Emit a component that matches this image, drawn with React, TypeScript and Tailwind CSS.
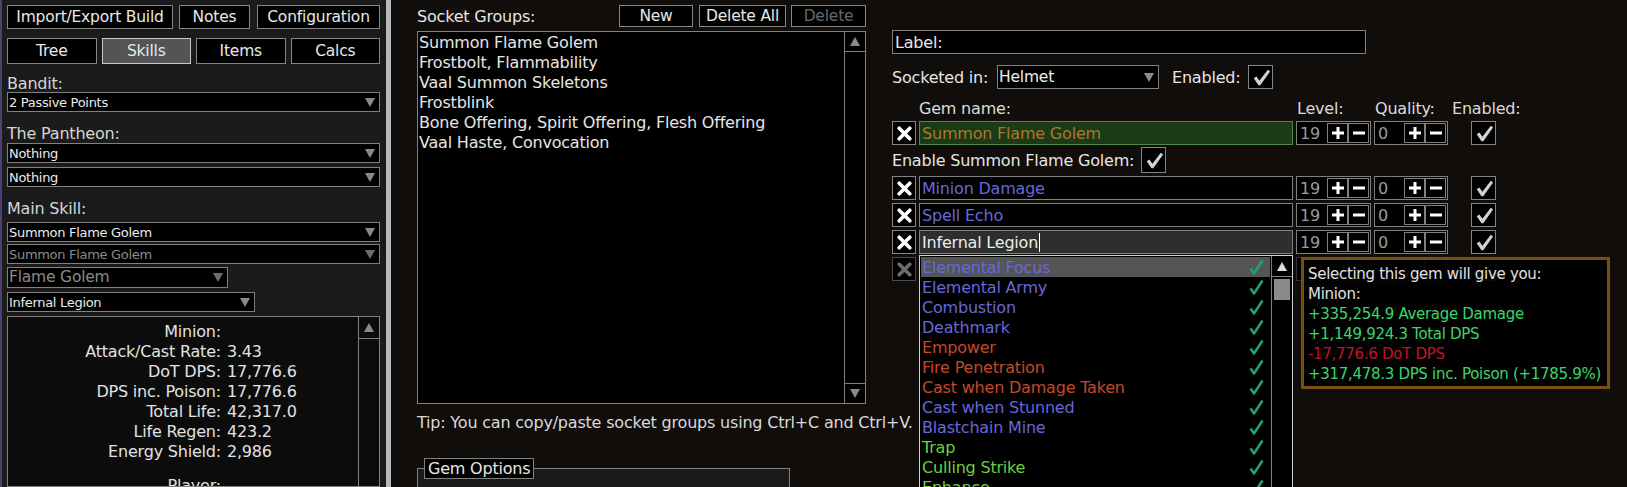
import React from "react";

const BLUE = "text-[#6767dc]";
const RED = "text-[#c4492b]";
const GREEN = "text-[#6ccf42]";

function Tri({ up = false, color = "#8a8a8a", size = 10 }: { up?: boolean; color?: string; size?: number }) {
  return (
    <svg width={size} height={size - 1} viewBox="0 0 10 9" className="shrink-0">
      <path d={up ? "M5 0L10 9H0Z" : "M0 0H10L5 9Z"} fill={color} />
    </svg>
  );
}

function XIcon({ color = "#fff" }: { color?: string }) {
  return (
    <svg width="15" height="15" viewBox="0 0 15 15">
      <path d="M2.2 2.2L12.8 12.8M12.8 2.2L2.2 12.8" stroke={color} strokeWidth="3.6" strokeLinecap="round" />
    </svg>
  );
}

function PlusIcon() {
  return (
    <svg width="12" height="12" viewBox="0 0 12 12">
      <path d="M6 0V12M0 6H12" stroke="#fff" strokeWidth="3" />
    </svg>
  );
}

function MinusIcon() {
  return (
    <svg width="12" height="12" viewBox="0 0 12 12">
      <path d="M0 6H12" stroke="#fff" strokeWidth="3" />
    </svg>
  );
}

function CheckIcon({ color = "#d2d2d2" }: { color?: string }) {
  return (
    <svg width="20" height="20" viewBox="0 0 22 22">
      <path d="M3 12.5L6 10.5L9.2 15L18.5 3L21 5L10.2 20H8.2Z" fill={color} />
    </svg>
  );
}

function SmallCheck() {
  return (
    <svg width="15" height="17" viewBox="0 0 15 17">
      <path d="M1.5 9.5L5 14.5L13.5 1.5" stroke="#22a06c" strokeWidth="2.6" fill="none" strokeLinejoin="round" />
    </svg>
  );
}

function Btn({
  children,
  className = "",
  active = false,
  disabled = false,
}: {
  children: React.ReactNode;
  className?: string;
  active?: boolean;
  disabled?: boolean;
}) {
  return (
    <div
      className={`flex shrink-0 items-center justify-center whitespace-nowrap border pt-[1px] text-[15.5px] ${
        active ? "border-[#c8c8c8] bg-[#545454]" : "border-[#858585] bg-black"
      } ${disabled ? "text-[#686868]" : "text-[#e8e8e8]"} ${className}`}
    >
      {children}
    </div>
  );
}

function Select({
  text,
  className = "",
  hClass = "h-[20px]",
  dim = false,
  big = false,
}: {
  text: string;
  className?: string;
  hClass?: string;
  dim?: boolean;
  big?: boolean;
}) {
  return (
    <div
      className={`flex shrink-0 items-center justify-between border border-[#808080] bg-black pl-[1px] pr-[4px] ${hClass} ${className}`}
    >
      <span
        className={`whitespace-nowrap pt-[1px] ${big ? "text-[15.5px] tracking-[-0.2px]" : "text-[13px] tracking-[-0.3px]"} ${
          dim ? "text-[#8a8a8a]" : "text-[#ececec]"
        }`}
      >
        {text}
      </span>
      <Tri color={dim ? "#6c6c6c" : "#8a8a8a"} />
    </div>
  );
}

function Label({ children, className = "" }: { children: React.ReactNode; className?: string }) {
  return <div className={`h-[16px] shrink-0 leading-[16px] text-[#d6d6d6] ${className}`}>{children}</div>;
}

function Check({ className = "", hClass = "h-[24px]", dim = false }: { className?: string; hClass?: string; dim?: boolean }) {
  return (
    <div
      className={`flex w-[25px] shrink-0 items-center justify-center border bg-black ${
        dim ? "border-[#3c3c3c]" : "border-[#858585]"
      } ${hClass} ${className}`}
    >
      {!dim && <CheckIcon />}
    </div>
  );
}

const stats: [string, string][] = [
  ["Minion:", ""],
  ["Attack/Cast Rate:", "3.43"],
  ["DoT DPS:", "17,776.6"],
  ["DPS inc. Poison:", "17,776.6"],
  ["Total Life:", "42,317.0"],
  ["Life Regen:", "423.2"],
  ["Energy Shield:", "2,986"],
];

function Stats() {
  return (
    <div className="mt-[4px] flex min-h-0 flex-1 overflow-hidden border border-[#808080] bg-[#0c0c0c]">
      <div className="flex-1 pt-[5px] text-[#e2e2e2]">
        {stats.map(([l, v]) => (
          <div key={l} className="flex h-[20px] leading-[20px]">
            <span className="w-[213px] text-right">{l}</span>
            <span className="pl-[6px]">{v}</span>
          </div>
        ))}
        <div className="mt-[14px] flex h-[20px] leading-[20px]">
          <span className="w-[213px] text-right">Player:</span>
        </div>
      </div>
      <div className="w-[21px] border-l border-[#808080]">
        <div className="flex h-[22px] items-center justify-center border-b border-[#808080]">
          <Tri up />
        </div>
      </div>
    </div>
  );
}

function LeftPanel() {
  return (
    <div className="flex w-[386px] shrink-0 flex-col border-l-2 border-[#4d4072] bg-[#1b1b1b] pl-[5px] pr-[6px] pt-[5px]">
      <div className="flex h-[24px] shrink-0 gap-[6px]">
        <Btn className="w-[166px]">Import/Export Build</Btn>
        <Btn className="w-[71px]">Notes</Btn>
        <Btn className="ml-[1px] w-[123px]">Configuration</Btn>
      </div>
      <div className="mt-[9px] grid h-[24px] shrink-0 grid-cols-4 gap-[5px]">
        <Btn>Tree</Btn>
        <Btn active>Skills</Btn>
        <Btn>Items</Btn>
        <Btn>Calcs</Btn>
      </div>
      <Label className="mt-[14px]">Bandit:</Label>
      <Select text="2 Passive Points" />
      <Label className="mt-[14px]">The Pantheon:</Label>
      <Select className="mt-[1px]" text="Nothing" />
      <Select className="mt-[4px]" text="Nothing" />
      <Label className="mt-[14px]">Main Skill:</Label>
      <Select className="mt-[5px]" text="Summon Flame Golem" />
      <Select className="mt-[2px]" text="Summon Flame Golem" dim />
      <Select className="mt-[3px] w-[221px]" hClass="h-[21px]" text="Flame Golem" dim big />
      <Select className="mt-[4px] w-[248px]" text="Infernal Legion" />
      <Stats />
    </div>
  );
}

const groups = [
  "Summon Flame Golem",
  "Frostbolt, Flammability",
  "Vaal Summon Skeletons",
  "Frostblink",
  "Bone Offering, Spirit Offering, Flesh Offering",
  "Vaal Haste, Convocation",
];

function SocketGroups() {
  return (
    <div className="flex w-[449px] shrink-0 flex-col pt-[5px]">
      <div className="flex h-[22px] shrink-0 items-center">
        <span className="pt-[1px]">Socket Groups:</span>
        <Btn className="ml-auto h-full w-[74px]">New</Btn>
        <Btn className="ml-[6px] h-full w-[87px]">Delete All</Btn>
        <Btn className="ml-[5px] h-full w-[75px]" disabled>
          Delete
        </Btn>
      </div>
      <div className="mt-[4px] flex h-[373px] shrink-0 border border-[#808080] bg-black">
        <div className="flex-1 pl-[1px] pt-[1px]">
          {groups.map((g) => (
            <div key={g} className="h-[20px] whitespace-nowrap leading-[20px]">
              {g}
            </div>
          ))}
        </div>
        <div className="flex w-[21px] flex-col justify-between border-l border-[#808080]">
          <div className="flex h-[20px] items-center justify-center border-b border-[#808080]">
            <Tri up />
          </div>
          <div className="flex h-[20px] items-center justify-center border-t border-[#808080]">
            <Tri />
          </div>
        </div>
      </div>
      <div className="mt-[9px] h-[20px] shrink-0 whitespace-nowrap leading-[20px] text-[#dadada]">
        Tip: You can copy/paste socket groups using Ctrl+C and Ctrl+V.
      </div>
      <div className="relative mt-[25px] shrink-0 pt-[10px]">
        <div className="h-[40px] w-[373px] border border-[#808080] bg-[#1b1b1b]" />
        <div className="absolute left-[7px] top-0 flex h-[21px] items-center border border-[#808080] bg-black px-[3px] pt-[1px]">
          Gem Options
        </div>
      </div>
    </div>
  );
}

function Spin({ value, className = "", dim = false }: { value: string; className?: string; dim?: boolean }) {
  const bd = dim ? "border-[#333]" : "border-[#808080]";
  return (
    <div className={`flex shrink-0 items-center border bg-black p-[1px] ${bd} ${className}`}>
      <span className="flex-1 pl-[2px] pt-[1px] text-[#9c9c9c]">{dim ? "" : value}</span>
      <div className={`flex h-full w-[21px] items-center justify-center border ${bd}`}>{!dim && <PlusIcon />}</div>
      <div className={`flex h-full w-[21px] items-center justify-center border ${bd}`}>{!dim && <MinusIcon />}</div>
    </div>
  );
}

function GemRow({
  name = "",
  nameClass = "",
  boxClass = "border-[#808080] bg-black",
  dim = false,
  cursor = false,
  className = "",
}: {
  name?: string;
  nameClass?: string;
  boxClass?: string;
  dim?: boolean;
  cursor?: boolean;
  className?: string;
}) {
  return (
    <div className={`flex h-[24px] shrink-0 ${className}`}>
      <div
        className={`flex w-[24px] items-center justify-center border bg-black ${
          dim ? "border-[#4a4a4a]" : "border-[#858585]"
        }`}
      >
        <XIcon color={dim ? "#6c6c6c" : "#fff"} />
      </div>
      <div className={`ml-[3px] flex w-[374px] items-center border px-[2px] pt-[1px] ${boxClass}`}>
        <span className={nameClass}>{name}</span>
        {cursor && <span className="ml-[1px] h-[19px] w-[1px] bg-white" />}
      </div>
      <Spin value="19" dim={dim} className="ml-[3px] w-[75px]" />
      <Spin value="0" dim={dim} className="ml-[3px] w-[74px]" />
      <Check className="ml-[23px]" dim={dim} />
    </div>
  );
}

const gems: [string, string][] = [
  ["Elemental Focus", BLUE],
  ["Elemental Army", BLUE],
  ["Combustion", BLUE],
  ["Deathmark", BLUE],
  ["Empower", RED],
  ["Fire Penetration", RED],
  ["Cast when Damage Taken", RED],
  ["Cast when Stunned", BLUE],
  ["Blastchain Mine", BLUE],
  ["Trap", GREEN],
  ["Culling Strike", GREEN],
  ["Enhance", GREEN],
];

function GemList() {
  return (
    <div className="absolute left-[27px] top-[255px] flex h-[250px] w-[374px] border border-[#cfcfcf] bg-black">
      <div className="flex-1 p-[1px]">
        {gems.map(([n, c], i) => (
          <div
            key={n}
            className={`flex h-[20px] items-center justify-between pl-[1px] pr-[6px] ${i === 0 ? "bg-[#555]" : ""}`}
          >
            <span className={`pt-[1px] ${c}`}>{n}</span>
            <SmallCheck />
          </div>
        ))}
      </div>
      <div className="w-[21px] border-l border-[#808080]">
        <div className="mt-[1px] flex h-[20px] items-center justify-center border-b border-[#808080]">
          <Tri up color="#dcdcdc" />
        </div>
        <div className="mx-[2px] mt-[2px] h-[21px] bg-[#8a8a8a]" />
      </div>
    </div>
  );
}

function Tooltip() {
  return (
    <div className="absolute left-[409px] top-[257px] w-[309px] border-[3px] border-[#7b500c] bg-black/85 px-[4px] pb-[2px] pt-[4px] text-[15px] leading-[20px] tracking-[-0.3px]">
      <div className="text-[#e0e0e0]">Selecting this gem will give you:</div>
      <div className="text-[#e0e0e0]">Minion:</div>
      <div className="text-[#3cd46c]">+335,254.9 Average Damage</div>
      <div className="text-[#3cd46c]">+1,149,924.3 Total DPS</div>
      <div className="text-[#c3122c]">-17,776.6 DoT DPS</div>
      <div className="whitespace-nowrap text-[#3cd46c]">+317,478.3 DPS inc. Poison (+1785.9%)</div>
    </div>
  );
}

function GemPanel() {
  return (
    <div className="relative ml-[26px] flex flex-1 flex-col pt-[30px]">
      <div className="flex h-[24px] w-[474px] shrink-0 items-center border border-[#808080] bg-black pl-[2px] pt-[1px]">
        Label:
      </div>
      <div className="mt-[11px] flex h-[24px] shrink-0 items-center">
        <span className="w-[105px] pt-[1px]">Socketed in:</span>
        <Select className="w-[162px]" hClass="h-[24px]" text="Helmet" big />
        <span className="ml-[13px] w-[76px] pt-[1px]">Enabled:</span>
        <Check />
      </div>
      <div className="mt-[9px] flex h-[20px] shrink-0 items-center pt-[1px] text-[#dcdcdc]">
        <span className="ml-[27px] w-[378px]">Gem name:</span>
        <span className="w-[78px]">Level:</span>
        <span className="w-[77px]">Quality:</span>
        <span>Enabled:</span>
      </div>
      <GemRow
        className="mt-[3px]"
        name="Summon Flame Golem"
        nameClass="text-[#a9792c]"
        boxClass="border-[#4e8a46] bg-[#1b3b17]"
      />
      <div className="mt-[2px] flex h-[26px] shrink-0 items-center">
        <span className="w-[249px] pt-[1px]">Enable Summon Flame Golem:</span>
        <Check hClass="h-[26px]" />
      </div>
      <GemRow className="mt-[3px]" name="Minion Damage" nameClass={BLUE} />
      <GemRow className="mt-[3px]" name="Spell Echo" nameClass={BLUE} />
      <GemRow
        className="mt-[3px]"
        name="Infernal Legion"
        nameClass="text-[#ececec]"
        boxClass="border-[#808080] bg-[#2e2e2e]"
        cursor
      />
      <GemRow className="mt-[3px]" dim boxClass="border-[#3c3c3c] bg-black" />
      <GemList />
      <Tooltip />
    </div>
  );
}

export default function App() {
  return (
    <div className="flex h-[487px] w-[1627px] overflow-hidden bg-[#100d0b] font-['DejaVu_Sans',sans-serif] text-[16px] tracking-[-0.2px] text-[#e6e6e6]">
      <LeftPanel />
      <div className="w-[5px] shrink-0 bg-[#b9b9b9]" />
      <div className="flex flex-1 pl-[26px]">
        <SocketGroups />
        <GemPanel />
      </div>
    </div>
  );
}
